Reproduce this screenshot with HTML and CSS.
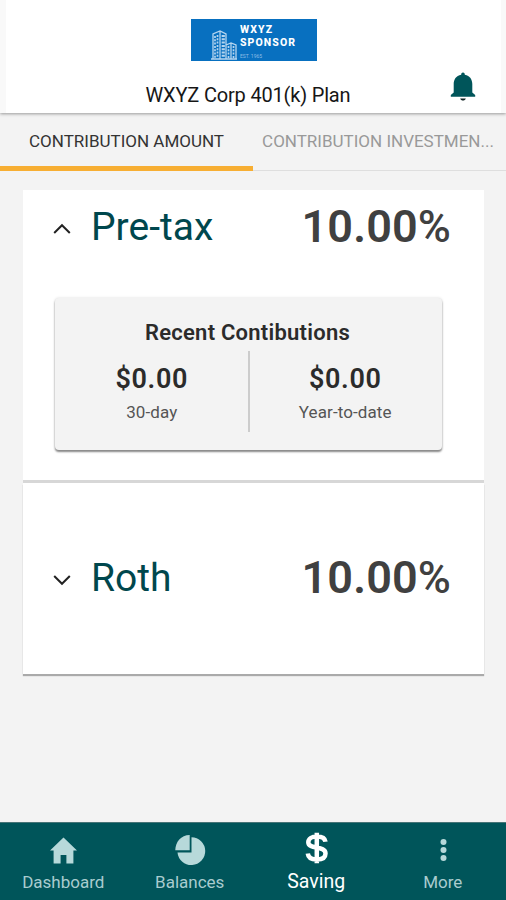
FILE: index.html
```html
<!DOCTYPE html>
<html lang="en">
<head>
<meta charset="utf-8">
<title>WXYZ Corp 401(k) Plan</title>
<link rel="stylesheet" href="styles.css">
</head>
<body>
<div class="app">
  <header class="header">
    <div class="header-inner">
      <div class="logo">
        <svg class="logo-art" viewBox="0 0 26 30" fill="none" stroke="#b5d5ef" stroke-width="1">
          <path d="M2 29V4L9 1l6 3v25M9 1v28M15 15l5-2 5 2v14M20 13v16M0 29h26" stroke-width="1.3"/>
          <path d="M4 6v22M6.500 5v23M11.500 5v23M13 5v23M17.500 16v12M22.500 16v12" stroke-width="1.700" stroke-dasharray="2 1.300"/>
        </svg>
        <div class="logo-text"><span class="logo-name">WXYZ</span><span class="logo-name">SPONSOR</span><span class="logo-tag">EST. 1965</span></div>
      </div>
      <h1 class="plan">WXYZ Corp 401(k) Plan</h1>
      <svg class="bell" viewBox="0 0 26 30"><path fill="#00555a" d="M13 .5c1.400 0 1.800 1 1.800 2.200C20 3.700 22.300 7.600 22.300 12v8.500l2.900 2.600v1.600H.8v-1.600l2.900-2.600V12c0-4.400 2.300-8.300 7.500-9.300C11.200 1.500 11.600.5 13 .5z"/><path d="M10.200 26.500h5.600c-.5 1.500-1.500 2-2.800 2s-2.300-.5-2.800-2z" fill="#122"/></svg>
    </div>
  </header>
  <nav class="tabs">
    <div class="tab active"><span>CONTRIBUTION AMOUNT</span></div>
    <div class="tab"><span>CONTRIBUTION INVESTMEN...</span></div>
  </nav>
  <main class="content">
    <section class="source pretax">
      <div class="source-row">
        <svg class="chevron" viewBox="0 0 18 12"><path d="M1.200 10L9 2.200l7.800 7.800"/></svg>
        <h2 class="name">Pre-tax</h2>
        <div class="rate">10.00<span class="pct">%</span></div>
      </div>
      <div class="recent">
        <h3>Recent Contibutions</h3>
        <div class="stats">
          <div class="stat"><div class="amount">$0.00</div><div class="period">30-day</div></div>
          <div class="stat"><div class="amount">$0.00</div><div class="period">Year-to-date</div></div>
        </div>
      </div>
    </section>
    <section class="source roth">
      <div class="source-row">
        <svg class="chevron" viewBox="0 0 18 12"><path d="M1.200 2L9 9.800 16.800 2"/></svg>
        <h2 class="name">Roth</h2>
        <div class="rate">10.00<span class="pct">%</span></div>
      </div>
    </section>
  </main>
  <nav class="bottom">
    <div class="item"><svg class="icon" viewBox="0 0 32 32"><path d="M16.500 2.500L30 15.500h-3.600V28.500h-7V20h-5.800v8.500h-7v-13H3z"/></svg><span>Dashboard</span></div>
    <div class="item"><svg class="icon" viewBox="0 0 32 32"><path d="M15.700 0v15.200H1.300C1.300 7 7 .2 15.700 0z"/><path d="M17.500 2.300A13.900 13.900 0 1 1 3.500 17.500h14z"/></svg><span>Balances</span></div>
    <div class="item selected"><svg class="icon" viewBox="0 0 32 32"><path class="dollar" d="M25.500 9.800C25 6 21.500 4.500 16.800 4.500c-5 0-8.500 2.200-8.500 5.700C8.300 18 25.500 13 25.500 21.500c0 4-3.500 6-8.700 6-5.100 0-8.600-2-9-6M16.800 .8v30.400"/></svg><span>Saving</span></div>
    <div class="item"><svg class="icon" viewBox="0 0 32 32"><circle cx="16.500" cy="7" r="3"/><circle cx="16.500" cy="15" r="3"/><circle cx="16.500" cy="23" r="3"/></svg><span>More</span></div>
  </nav>
</div>
</body>
</html>
```
FILE: styles.css
```css
* { box-sizing: border-box; }
body { margin: 0; font-family: Roboto, "Liberation Sans", sans-serif; background: #f3f3f3; }
h1, h2, h3 { margin: 0; font-weight: 400; }
.app { width: 506px; height: 900px; display: flex; flex-direction: column; }
.header { height: 113px; padding: 0 5px 0 6px; background: #f9f9f9; box-shadow: 0 1px 3px #999; z-index: 1; }
.header-inner { height: 113px; background: #fff; padding-top: 19px; display: flex; flex-direction: column; align-items: center; position: relative; }
.logo { width: 126px; height: 42px; background: #0870c0; display: flex; padding: 4px 0 0 20px; margin-left: 1px; }
.logo-art { width: 26px; height: 30px; margin-top: 7px; }
.logo-text { display: flex; flex-direction: column; margin-left: 3px; color: #fff; }
.logo-name { font-size: 10.500px; line-height: 13px; font-weight: 800; letter-spacing: 1.100px; }
.logo-tag { font-size: 5px; line-height: 6px; margin-top: 4px; color: #8fbde5; }
.plan { font-size: 20px; line-height: 24px; margin-top: 22px; margin-right: 11px; color: #161616; letter-spacing: -.18px; }
.bell { position: absolute; left: 444px; top: 72px; width: 26px; height: 30px; }
.tabs { height: 58px; display: flex; border-bottom: 1px solid #dedede; }
.tab { width: 253px; height: 58px; padding-top: 18px; text-align: center; font-size: 17px; line-height: 20px; font-weight: 450; color: #999; white-space: nowrap; letter-spacing: 0; padding-right: 3px; }
.tab.active { color: #333; border-bottom: 5px solid #f7ae32; width: 253px; padding-right: 0; }
.content { flex: 1; padding: 19px 22px 0 23px; }
.source { background: #fff; }
.pretax { height: 293px; padding: 8px 32px 0; border-bottom: 3px solid #d7d7d7; }
.roth { height: 191px; padding: 66px 32px 0; box-shadow: 0 2px 1px #aaa; }
.source-row { height: 58px; display: flex; align-items: center; }
.chevron { width: 18px; height: 12px; margin: 4px 0 0 -2px; fill: none; stroke: #222; stroke-width: 2; }
.name { font-size: 39px; line-height: 58px; color: #00474d; margin-left: 20px; letter-spacing: 0; }
.rate { margin-left: auto; margin-right: 1px; font-size: 45px; line-height: 58px; font-weight: 600; color: #404040; letter-spacing: .15px; white-space: nowrap; }
.pct { font-weight: 500; letter-spacing: 0; display: inline-block; }
.recent { height: 152px; margin: 42px 10px 0 0; background: #f3f3f3; border-radius: 4px; padding-top: 21px; text-align: center; box-shadow: 0 2px 2px #888, 0 0 3px #ddd; }
.recent h3 { font-size: 22px; line-height: 28px; font-weight: 600; color: #2b2b2b; letter-spacing: .25px; margin-right: 2px; }
.stats { display: flex; margin-top: 4px; padding-left: 1px; }
.stat { flex: 1; height: 81px; padding-top: 12px; }
.stat + .stat { border-left: 2px solid #ccc; padding-right: 1px; }
.amount { font-size: 27px; line-height: 32px; font-weight: 600; color: #2b2b2b; letter-spacing: .6px; }
.period { font-size: 17px; line-height: 22px; margin-top: 6px; color: #555; letter-spacing: .1px; }
.bottom { height: 78px; background: #00555a; border-top: 1px solid #467477; display: flex; }
.item { flex: 1; display: flex; flex-direction: column; align-items: center; padding-top: 12px; font-size: 17px; line-height: 22px; color: #a9cccf; }
.icon { width: 32px; height: 32px; fill: #b7d9da; }
.item span { margin-top: 4px; }
.selected { color: #fff; font-size: 19.500px; padding-top: 9px; }
.selected span { margin-top: 7px; }
.dollar { fill: none; stroke: #fff; stroke-width: 4.500; }
```
